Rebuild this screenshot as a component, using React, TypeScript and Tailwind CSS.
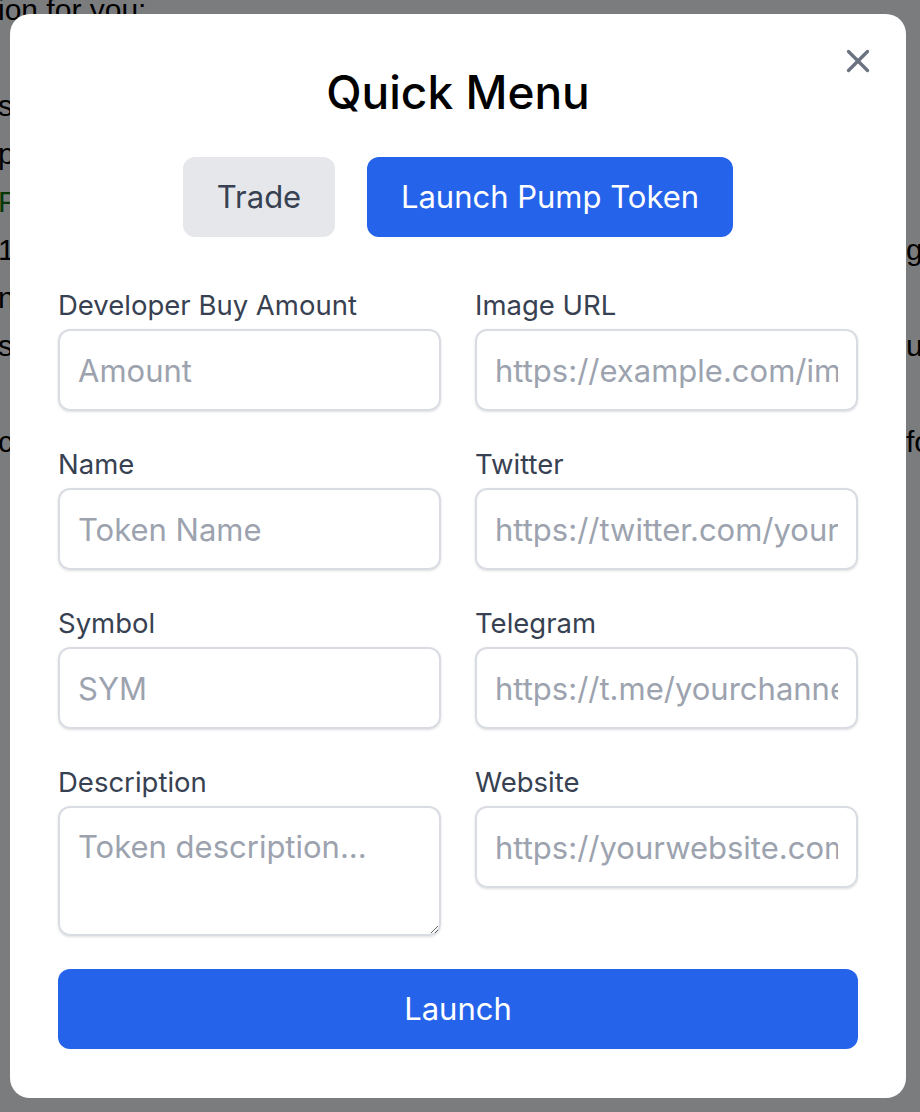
import { X } from "lucide-react";

const BACK_ROWS = [
  { left: "ion for you:", right: "", green: false },
  { left: "", right: "", green: false },
  { left: "send", right: "", green: false },
  { left: "price", right: "", green: false },
  { left: "Pool", right: "", green: true },
  { left: "1.", right: "go", green: false },
  { left: "network", right: "", green: false },
  { left: "swap", right: "use", green: false },
  { left: "", right: "", green: false },
  { left: "check", right: "for", green: false },
];

const FIELDS_LEFT = [
  { label: "Developer Buy Amount", placeholder: "Amount" },
  { label: "Name", placeholder: "Token Name" },
  { label: "Symbol", placeholder: "SYM" },
];

const FIELDS_RIGHT = [
  { label: "Image URL", placeholder: "https://example.com/image.png" },
  { label: "Twitter", placeholder: "https://twitter.com/yourhandle" },
  { label: "Telegram", placeholder: "https://t.me/yourchannel" },
  { label: "Website", placeholder: "https://yourwebsite.com" },
];

const font = "font-['Inter','Noto_Sans',sans-serif]";

function Field({ label, placeholder }: { label: string; placeholder: string }) {
  return (
    <div>
      <label className="mb-[8px] block text-[27.5px] leading-[32px] text-[#374151]">
        {label}
      </label>
      <input
        placeholder={placeholder}
        className="h-[82px] w-full rounded-[12px] border-2 border-[#d9dce2] px-[18px] text-[31px] text-[#111827] shadow-sm outline-none placeholder:text-[#9ca3af]"
      />
    </div>
  );
}

export default function App() {
  return (
    <div className={`relative h-[1112px] w-[920px] overflow-hidden bg-white ${font}`}>
      {/* page behind the dialog */}
      <div className="-mt-[14px] font-['Liberation_Sans',sans-serif] text-[30px] leading-[48px] text-black">
        {BACK_ROWS.map((r, i) => (
          <div key={i} className="grid grid-cols-[906px_14px]">
            <div className={`-ml-[2px] overflow-hidden whitespace-nowrap ${r.green ? "text-[#0b730b]" : ""}`}>
              {r.left || "\u00a0"}
            </div>
            <div className="overflow-hidden whitespace-nowrap">{r.right}</div>
          </div>
        ))}
      </div>

      <div className="fixed inset-0 bg-[#7b7c7e] mix-blend-multiply" />

      <div className="fixed inset-0 pt-[14px] pl-[10px]">
        <div className="relative w-[896px] rounded-[20px] bg-white px-[48px] pt-[48px] pb-[49px]">
          <button className="absolute right-[29px] top-[28px] text-[#6b7280]">
            <X size={38} strokeWidth={2.1} />
          </button>

          <h2 className="text-center text-[46px] font-medium leading-[60px] text-black">
            Quick Menu
          </h2>

          <div className="mt-[35px] flex justify-center gap-[32px]">
            <button className="h-[80px] w-[152px] rounded-[12px] bg-[#e5e7eb] text-[31px] text-[#374151]">
              Trade
            </button>
            <button className="h-[80px] w-[366px] rounded-[12px] bg-[#2563eb] text-[31px] text-white">
              Launch Pump Token
            </button>
          </div>

          <div className="mt-[52px] grid grid-cols-2 gap-x-[34px]">
            <div className="flex flex-col gap-[37px]">
              {FIELDS_LEFT.map((f) => (
                <Field key={f.label} {...f} />
              ))}
              <div>
                <label className="mb-[8px] block text-[27.5px] leading-[32px] text-[#374151]">
                  Description
                </label>
                <textarea
                  placeholder="Token description..."
                  className="block h-[130px] w-full rounded-[12px] border-2 border-[#d9dce2] px-[18px] py-[19px] text-[31px] leading-[40px] shadow-sm outline-none placeholder:text-[#9ca3af]"
                />
              </div>
            </div>
            <div className="flex flex-col gap-[37px]">
              {FIELDS_RIGHT.map((f) => (
                <Field key={f.label} {...f} />
              ))}
            </div>
          </div>

          <button className="mt-[33px] h-[80px] w-full rounded-[12px] bg-[#2563eb] text-[31px] text-white">
            Launch
          </button>
        </div>
      </div>
    </div>
  );
}
